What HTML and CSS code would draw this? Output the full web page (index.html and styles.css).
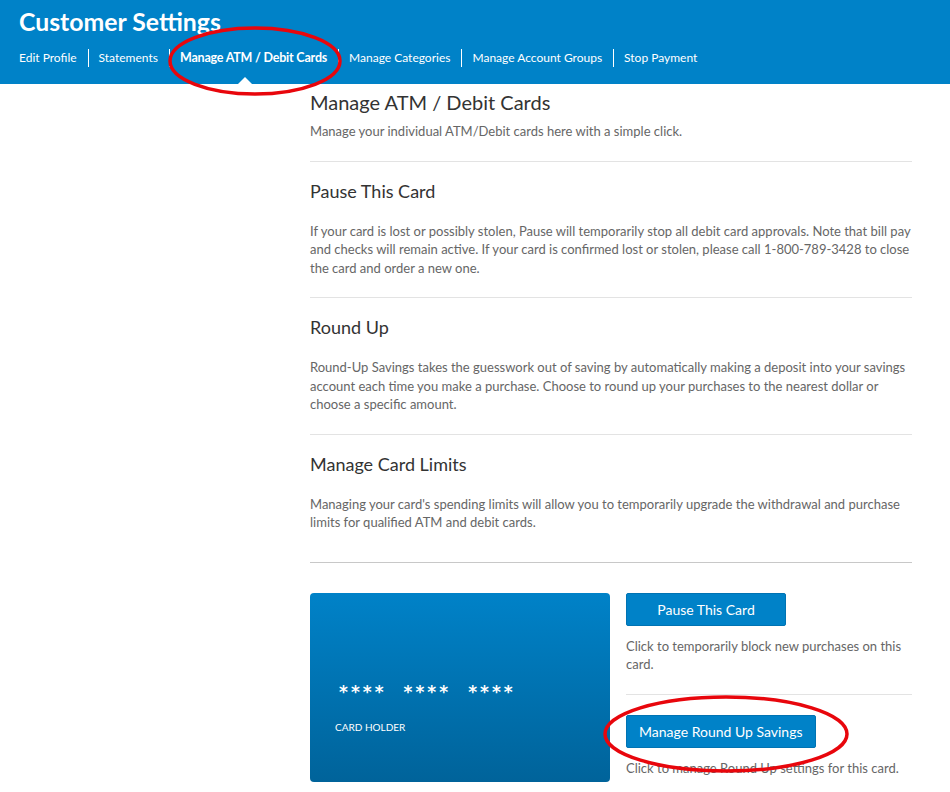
FILE: index.html
```html
<!DOCTYPE html>
<html>
<head>
<meta charset="utf-8">
<link rel="stylesheet" href="styles.css">
</head>
<body>
<header class="topbar">
  <h1 class="page-title">Customer Settings</h1>
  <nav class="tabs">
    <a class="tab">Edit Profile</a>
    <a class="tab">Statements</a>
    <a class="tab active">Manage ATM / Debit Cards</a>
    <a class="tab">Manage Categories</a>
    <a class="tab">Manage Account Groups</a>
    <a class="tab">Stop Payment</a>
  </nav>
</header>
<main class="content">
  <section class="intro">
    <h2 class="main-heading">Manage ATM / Debit Cards</h2>
    <p class="text">Manage your individual ATM/Debit cards here with a simple click.</p>
  </section>
  <section class="block">
    <h3 class="heading">Pause This Card</h3>
    <p class="text">If your card is lost or possibly stolen, Pause will temporarily stop all debit card approvals. Note that bill pay and checks will remain active. If your card is confirmed lost or stolen, please call 1-800-789-3428 to close the card and order a new one.</p>
  </section>
  <section class="block">
    <h3 class="heading">Round Up</h3>
    <p class="text">Round-Up Savings takes the guesswork out of saving by automatically making a deposit into your savings account each time you make a purchase. Choose to round up your purchases to the nearest dollar or choose a specific amount.</p>
  </section>
  <section class="block last">
    <h3 class="heading">Manage Card Limits</h3>
    <p class="text">Managing your card's spending limits will allow you to temporarily upgrade the withdrawal and purchase limits for qualified ATM and debit cards.</p>
  </section>
  <section class="card-row">
    <div class="card">
      <div class="card-number"><span>****</span><span>****</span><span>****</span></div>
      <div class="card-holder">CARD HOLDER</div>
    </div>
    <div class="actions">
      <div class="action">
        <button class="btn btn-pause">Pause This Card</button>
        <p class="text">Click to temporarily block new purchases on this card.</p>
      </div>
      <div class="action second">
        <button class="btn">Manage Round Up Savings</button>
        <p class="text">Click to manage Round Up settings for this card.</p>
      </div>
    </div>
  </section>
</main>
<svg class="marks" width="950" height="792" viewBox="0 0 950 792">
  <ellipse cx="255" cy="61" rx="85" ry="33" fill="none" stroke="#e8060c" stroke-width="3.5"/>
  <ellipse cx="726" cy="734" rx="121" ry="37" fill="none" stroke="#e8060c" stroke-width="3.5"/>
</svg>
</body>
</html>
```
FILE: styles.css
```css
html, body {
  margin: 0;
  padding: 0;
  background: #fff;
}
body {
  font-family: Lato, "Open Sans", sans-serif;
  color: #333;
  position: relative;
  width: 950px;
  height: 792px;
  overflow: hidden;
}
.topbar {
  background: #0082c8;
  height: 84px;
  box-sizing: border-box;
  padding: 8px 0 0 19px;
  color: #fff;
}
.page-title {
  margin: 0;
  font-size: 24.8px;
  font-weight: 700;
  line-height: 28px;
}
.tabs {
  display: flex;
  margin-top: 13px;
}
.tab {
  position: relative;
  font-size: 12px;
  line-height: 18px;
  padding: 0 11px 0 10px;
  border-left: 1px solid #fff;
  color: #fff;
  white-space: nowrap;
}
.tab:first-child {
  padding-left: 0;
  border-left: none;
}
.tab.active {
  font-weight: 700;
  font-size: 12.5px;
  letter-spacing: -0.2px;
}
.tab.active::after {
  content: "";
  position: absolute;
  left: 67px;
  bottom: -18px;
  border-left: 8px solid transparent;
  border-right: 8px solid transparent;
  border-bottom: 8px solid #fff;
}
.content {
  margin-left: 310px;
  width: 602px;
}
.intro {
  padding-top: 7px;
  padding-bottom: 20px;
  border-bottom: 1px solid #e3e3e3;
}
.main-heading, .heading {
  margin: 0;
  font-size: 18px;
  font-weight: 400;
  line-height: 22px;
  color: #333;
}
.main-heading {
  font-size: 20px;
}
.text {
  margin: 0;
  font-size: 13px;
  line-height: 18.5px;
  color: #666;
}
.intro .text {
  margin-top: 9px;
}
.block {
  padding: 18px 0 20px;
  border-bottom: 1px solid #e3e3e3;
}
.block .text {
  margin-top: 20px;
}
.block.last {
  padding-bottom: 30px;
  border-bottom-color: #c8c8c8;
}
.card-row {
  display: flex;
  gap: 16px;
  margin-top: 30px;
}
.card {
  width: 300px;
  height: 189px;
  flex: none;
  border-radius: 4px;
  background: linear-gradient(#0082c8, #00639a);
  box-sizing: border-box;
  padding: 88px 0 0 25px;
  color: #fff;
}
.card-number {
  display: flex;
  gap: 17px;
  font-family: "DejaVu Sans", sans-serif;
  font-size: 17px;
  font-weight: 700;
  letter-spacing: 3px;
  line-height: 22px;
  padding-left: 4px;
}
.card-holder {
  margin-top: 18px;
  font-size: 10px;
  line-height: 12px;
}
.actions {
  flex: 1;
}
.btn {
  display: block;
  background: #0082c8;
  color: #fff;
  border: 1px solid #0073b3;
  border-radius: 2px;
  font-family: Lato, sans-serif;
  font-size: 14px;
  height: 33px;
  padding: 0 12px;
  cursor: pointer;
}
.btn-pause {
  width: 160px;
}
.action .text {
  margin-top: 11px;
}
.action:first-child {
  padding-bottom: 20px;
  border-bottom: 1px solid #e3e3e3;
}
.action.second {
  padding-top: 20px;
}
.action.second .text {
  margin-top: 11px;
}
.marks {
  position: absolute;
  left: 0;
  top: 0;
  pointer-events: none;
}
```
